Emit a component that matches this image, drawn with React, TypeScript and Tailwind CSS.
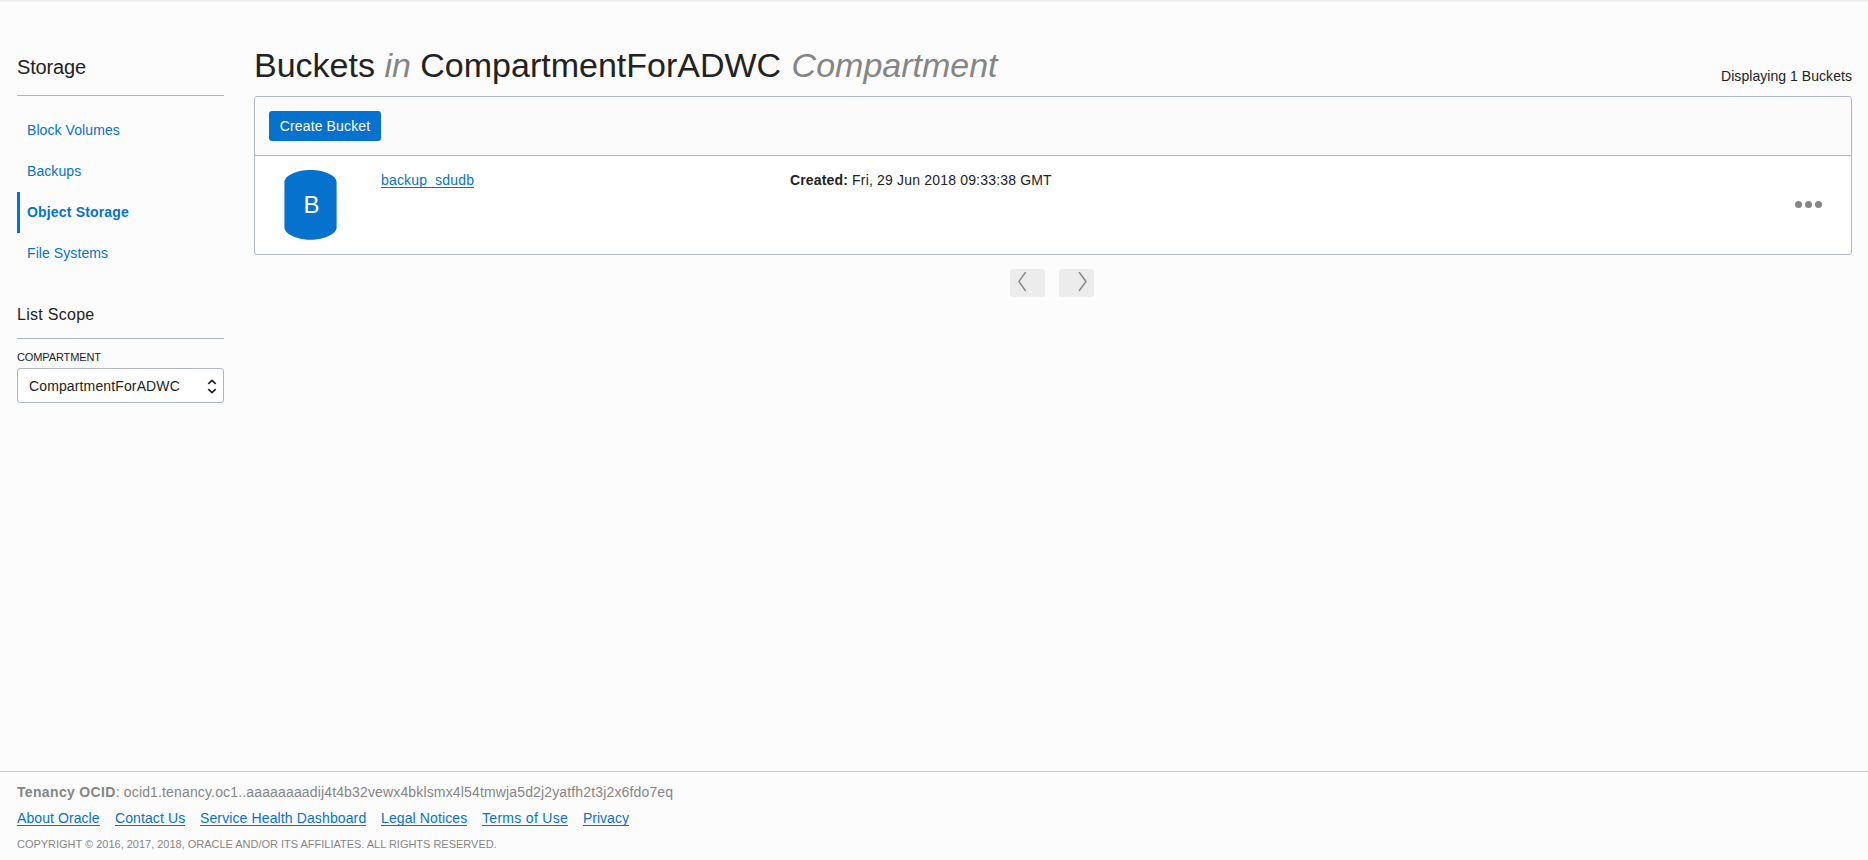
const navItems = [
  { label: 'Block Volumes', active: false },
  { label: 'Backups', active: false },
  { label: 'Object Storage', active: true },
  { label: 'File Systems', active: false },
];

const footerLinks = [
  { label: 'About Oracle', style: 'w-[83px] tracking-[0.08px]' },
  { label: 'Contact Us', style: 'w-[70px] tracking-[0.1px]' },
  { label: 'Service Health Dashboard', style: 'w-[166px] tracking-[0.12px]' },
  { label: 'Legal Notices', style: 'w-[86px] tracking-[0.12px]' },
  { label: 'Terms of Use', style: 'w-[86px] tracking-[0.3px]' },
  { label: 'Privacy', style: 'w-[46px]' },
];

function Sidebar() {
  return (
    <aside className="w-[207px] shrink-0">
      <h2 className="h-[43px] border-b border-[#afb5c1] text-[20px] leading-[28px] tracking-[-0.15px]">Storage</h2>
      <nav className="mt-[14px]">
        {navItems.map((item) => (
          <a
            key={item.label}
            className={
              item.active
                ? 'block h-[41px] border-l-3 border-[#0572ce] pl-[7px] text-[14px] leading-[41px] font-bold tracking-[0.17px] text-[#0572ce]'
                : 'block h-[41px] pl-[10px] text-[14px] leading-[41px] tracking-[0.08px] text-[#0572ce]'
            }
          >
            {item.label}
          </a>
        ))}
      </nav>
      <h3 className="mt-[29px] h-[36px] border-b border-[#afb5c1] text-[16px] leading-[24px] tracking-[0.28px]">List Scope</h3>
      <label className="mt-[10px] block text-[11px] leading-[16px] tracking-[-0.12px] uppercase">Compartment</label>
      <div className="mt-[3px] flex h-[35px] items-center justify-between rounded-[3px] border border-[#afb5c1] bg-white pr-[6px] pl-[11px] text-[14px]">
        <span className="pt-[2px] tracking-[0.13px]">CompartmentForADWC</span>
        <svg width="10" height="16" viewBox="0 0 10 16" fill="none" stroke="#222" strokeWidth="1.8">
          <path d="M1.3 5.8 5 2.4 8.7 5.8M1.3 11.2 5 14.6 8.7 11.2" />
        </svg>
      </div>
    </aside>
  );
}

function BucketList() {
  return (
    <section className="h-[159px] rounded-[3px] border border-[#afb5c1] bg-white">
      <div className="flex h-[59px] items-start rounded-t-[2px] border-b border-[#afb5c1] bg-[#fbfbfb] pt-[14px] pl-[14px]">
        <button className="h-[30px] w-[112px] rounded-[3px] bg-[#0572ce] text-[14px] tracking-[0.13px] text-white">Create Bucket</button>
      </div>
      <div className="flex pt-[14px] pl-[29px]">
        <div className="grid h-[70px] w-[53px] place-items-center">
          <svg width="53" height="70" viewBox="0 0 53 70" fill="#0572ce" className="col-start-1 row-start-1">
            <path d="M.4 12C.4 6 12 0 26.5 0S52.6 6 52.6 12V57.5C52.6 63.5 41 69.7 26.5 69.7S.4 63.5 .4 57.5Z" />
          </svg>
          <span className="col-start-1 row-start-1 pl-[2px] text-[24px] text-white">B</span>
        </div>
        <div className="ml-[44px] w-[409px] text-[14px] leading-[17px]">
          <a className="block h-[18px] w-[93px] border-b border-[#0572ce] pt-[2px] leading-[17px] tracking-[0.17px] text-[#0572ce]">backup_sdudb</a>
        </div>
        <div className="pt-[2px] text-[14px] leading-[17px] tracking-[0.18px]">
          <b className="tracking-[0.15px]">Created:</b> Fri, 29 Jun 2018 09:33:38 GMT
        </div>
        <div className="mt-[31px] mr-[29.5px] ml-auto flex gap-[3px]">
          <i className="size-[7px] rounded-full bg-[#858585]" />
          <i className="size-[7px] rounded-full bg-[#858585]" />
          <i className="size-[7px] rounded-full bg-[#858585]" />
        </div>
      </div>
    </section>
  );
}

function Pagination() {
  return (
    <div className="mt-[14px] flex gap-[14px] pl-[756px]">
      <button className="flex h-[28px] w-[35px] rounded-[3px] bg-[#ececec] pt-[3px] pl-[8px]">
        <svg width="9" height="20" viewBox="0 0 9 20" fill="none" stroke="#858585" strokeWidth="1.4">
          <path d="M7.7 0 .8 9.5 7.7 19" />
        </svg>
      </button>
      <button className="flex h-[28px] w-[35px] rounded-[3px] bg-[#ececec] pt-[3px] pl-[19px]">
        <svg width="9" height="20" viewBox="0 0 9 20" fill="none" stroke="#858585" strokeWidth="1.4">
          <path d="M1 0 8 9.5 1 19" />
        </svg>
      </button>
    </div>
  );
}

function Footer() {
  return (
    <footer className="h-[89px] border-t border-[#cccccc] px-[17px] text-[14px] text-[#858585]">
      <p className="mt-[12px] leading-[17px] tracking-[0.15px]">
        <b className="tracking-[0.34px]">Tenancy OCID</b>: ocid1.tenancy.oc1..aaaaaaaadij4t4b32vewx4bklsmx4l54tmwja5d2j2yatfh2t3j2x6fdo7eq
      </p>
      <div className="mt-[9px] flex gap-[15px]">
        {footerLinks.map((link) => (
          <a
            key={link.label}
            className={`${link.style} h-[16px] border-b border-[#0572ce] leading-[16px] whitespace-nowrap text-[#0572ce]`}
          >
            {link.label}
          </a>
        ))}
      </div>
      <p className="mt-[10px] text-[11px] leading-[16px] tracking-[-0.015px]">
        COPYRIGHT © 2016, 2017, 2018, ORACLE AND/OR ITS AFFILIATES. ALL RIGHTS RESERVED.
      </p>
    </footer>
  );
}

export default function App() {
  return (
    <div className="flex h-[860px] w-[1868px] flex-col overflow-hidden border-t border-[#ececec] bg-[#fcfcfc] font-['Liberation_Sans',Arial,sans-serif] text-[#222]">
      <div className="h-px bg-[#f4f4f4]" />
      <div className="flex flex-1 pt-[51px] pr-[16px] pl-[17px]">
        <Sidebar />
        <main className="-mt-[12px] ml-[30px] min-w-0 flex-1">
          <header className="flex h-[55px] items-end justify-between">
            <h1 className="pb-[11px] text-[34px] leading-[40px]">
              Buckets <em className="text-[#858585]">in</em> CompartmentForADWC{' '}
              <em className="ml-px text-[#858585]">Compartment</em>
            </h1>
            <span className="pb-[11px] text-[14px] leading-[18px] tracking-[0.05px]">Displaying 1 Buckets</span>
          </header>
          <BucketList />
          <Pagination />
        </main>
      </div>
      <Footer />
    </div>
  );
}
